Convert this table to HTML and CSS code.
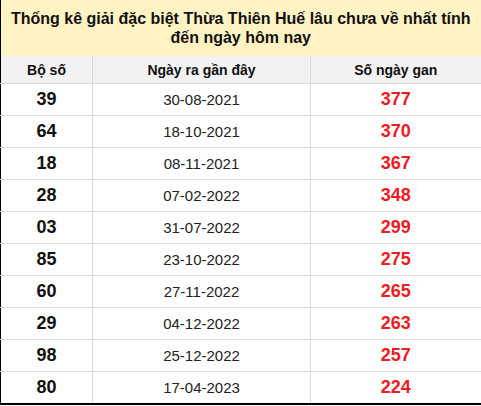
FILE: index.html
```html
<!DOCTYPE html>
<html lang="vi">
<head>
<meta charset="utf-8">
<link rel="stylesheet" href="styles.css">
</head>
<body>
<table class="stats">
  <colgroup><col class="c1"><col class="c2"><col class="c3"></colgroup>
  <thead>
    <tr><th colspan="3" class="title">Thống kê giải đặc biệt Thừa Thiên Huế lâu chưa về nhất tính<br>đến ngày hôm nay</th></tr>
    <tr class="cols"><th>Bộ số</th><th>Ngày ra gần đây</th><th>Số ngày gan</th></tr>
  </thead>
  <tbody>
    <tr><td class="num">39</td><td class="date">30-08-2021</td><td class="gan">377</td></tr>
    <tr><td class="num">64</td><td class="date">18-10-2021</td><td class="gan">370</td></tr>
    <tr><td class="num">18</td><td class="date">08-11-2021</td><td class="gan">367</td></tr>
    <tr><td class="num">28</td><td class="date">07-02-2022</td><td class="gan">348</td></tr>
    <tr><td class="num">03</td><td class="date">31-07-2022</td><td class="gan">299</td></tr>
    <tr><td class="num">85</td><td class="date">23-10-2022</td><td class="gan">275</td></tr>
    <tr><td class="num">60</td><td class="date">27-11-2022</td><td class="gan">265</td></tr>
    <tr><td class="num">29</td><td class="date">04-12-2022</td><td class="gan">263</td></tr>
    <tr><td class="num">98</td><td class="date">25-12-2022</td><td class="gan">257</td></tr>
    <tr><td class="num">80</td><td class="date">17-04-2023</td><td class="gan">224</td></tr>
  </tbody>
</table>
</body>
</html>
```
FILE: styles.css
```css
html, body {
  margin: 0;
  padding: 0;
  background: #ffffff;
}
body {
  font-family: "Liberation Sans", Arial, sans-serif;
  color: #111111;
}
.stats {
  width: 481px;
  border-collapse: collapse;
  border-left: 1px solid #000;
  border-right: 2px solid #000;
  border-bottom: 2px solid #000;
  table-layout: fixed;
}
.c1 { width: 92px; }
.c2 { width: 218px; }
.c3 { width: 171px; }
.stats th, .stats td {
  padding: 0;
  text-align: center;
}
.title {
  background: #fff3c4;
  height: 56px;
  font-size: 16px;
  font-weight: bold;
  line-height: 19px;
  color: #111;
}
.title-pad { padding-bottom: 2px; }
.cols th {
  background: #f2f2f2;
  height: 27px;
  font-size: 14px;
  font-weight: bold;
  border-left: 1px solid #d9d9d9;
  border-bottom: 1px solid #d9d9d9;
}
.cols th:first-child { border-left: none; }
.stats td {
  height: 31px;
  border-bottom: 1px solid #d9d9d9;
  border-left: 1px solid #d9d9d9;
}
.stats td:first-child { border-left: none; }
.num {
  font-size: 18px;
  font-weight: bold;
  color: #111;
}
.date {
  font-size: 15px;
  color: #222;
}
.gan {
  font-size: 18px;
  font-weight: bold;
  color: #ed1c24;
}
```
